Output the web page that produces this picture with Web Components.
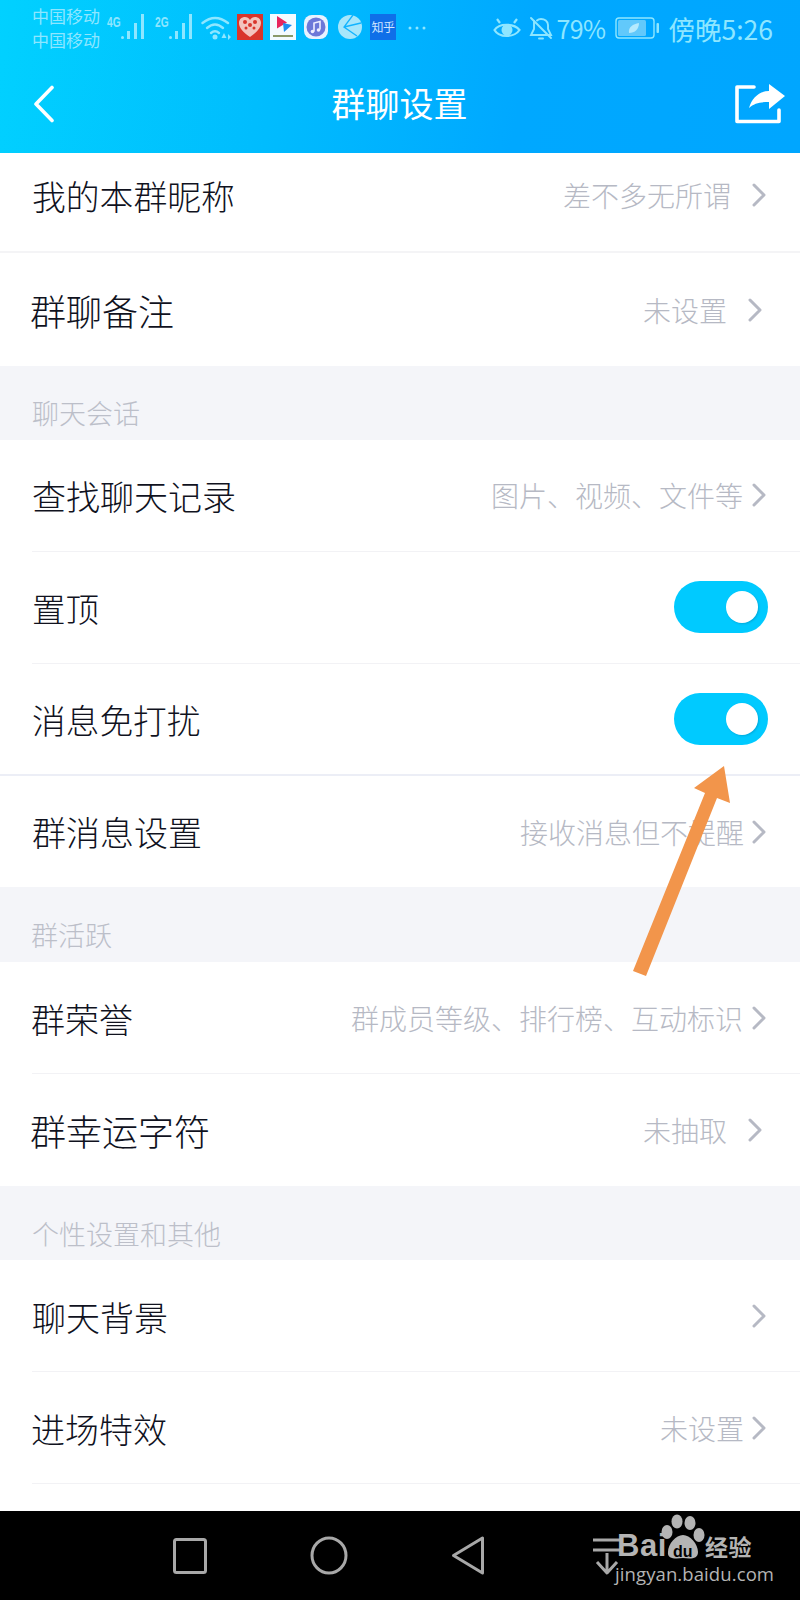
<!DOCTYPE html>
<html lang="zh-CN">
<head>
<meta charset="utf-8">
<title>群聊设置</title>
<style>
html, body { margin: 0; padding: 0; }
body {
	position: relative;
	width: 800px;
	height: 1600px;
	overflow: hidden;
	background: #fff;
	font-family: "Noto Sans CJK SC", "Noto Sans", sans-serif;
}
</style>
</head>
<body>
<qq-header title="群聊设置"></qq-header>
<set-row h="100" size="33.800" pad-bottom="16" line="full" value="差不多无所谓" gap="21" right="34">我的本群昵称</set-row>
<set-row h="113" size="36" left="30" value="未设置" gap="21" right="38" line="none">群聊备注</set-row>
<section-label h="74" pb="8">聊天会话</section-label>
<set-row h="112" size="34" pad-bottom="2" line="inset" value="图片、视频、文件等" gap="9" right="34">查找聊天记录</set-row>
<set-row h="112" size="33.500" pad-bottom="2" line="inset" toggle>置顶</set-row>
<set-row h="112" size="33.700" pad-bottom="2" line="strong" toggle>消息免打扰</set-row>
<set-row h="111" size="34" line="none" value="接收消息但不提醒" gap="8" right="34">群消息设置</set-row>
<section-label h="75" pb="8" left="31">群活跃</section-label>
<set-row h="112" size="34" left="31" line="inset" value="群成员等级、排行榜、互动标识" gap="9" right="34">群荣誉</set-row>
<set-row h="112" size="36" left="30" line="none" value="未抽取" gap="21" right="38">群幸运字符</set-row>
<section-label h="74" pb="7">个性设置和其他</section-label>
<set-row h="112" size="34" line="inset" chevron gap="0" right="34">聊天背景</set-row>
<set-row h="112" size="34" left="31" line="inset" value="未设置" gap="8" right="34">进场特效</set-row>
<set-row h="27" line="none"></set-row>
<android-nav></android-nav>
<baidu-mark></baidu-mark>
<pointer-arrow></pointer-arrow>
<script>
class StatusBar extends HTMLElement {
	constructor() {
		super();
		this.attachShadow({ mode: "open" });
		this.shadowRoot.innerHTML = `<style>
:host { display: flex; height: 58px; align-items: center; color: #8ee6ff; font-size: 17px; box-sizing: border-box; padding: 0 27px 2px 32px; }
.carrier { display: flex; flex-direction: column; line-height: 24px; width: 75px; }
.left { display: flex; align-items: flex-start; height: 28px; }
.right { display: flex; align-items: center; }
.left svg, .left .zhihu { flex: none; display: block; }
.right { margin-left: auto; font-size: 26px; }
.net { font: bold 15px/12px "Liberation Sans", sans-serif; width: 13px; margin-top: 2px; transform: scaleX(.68); transform-origin: left center; white-space: nowrap; }
.zhihu { width: 26px; height: 26px; background: #0f6fe8; color: #cfe6ff; font-size: 12px; line-height: 26px; text-align: center; margin-left: 8px; letter-spacing: -.5px; white-space: nowrap; overflow: hidden; }
.dots { margin: 11px 0 0 11px; }
.pct { margin: 0 9px 0 4px; letter-spacing: -.6px; font-size: 25px; }
.clock { margin-left: 10px; font-size: 26.500px; }
.bell { margin-left: 8px; }
</style>
<div class="carrier"><span>中国移动</span><span>中国移动</span></div>
<div class="left">
	<span class="net">4G</span>
	<svg width="26" height="28" viewBox="0 0 26 28"><g fill="#8ee6ff"><rect x="1" y="22" width="3" height="3" rx="1.5"/><rect x="7" y="17" width="3" height="8"/><rect x="14" y="9" width="3" height="16"/><rect x="21" y="0" width="3" height="25"/></g></svg>
	<span class="net" style="margin-left:9px">2G</span>
	<svg width="26" height="28" viewBox="0 0 26 28"><g fill="#8ee6ff"><rect x="1" y="22" width="3" height="3" rx="1.5"/><rect x="7" y="17" width="3" height="8"/><rect x="14" y="9" width="3" height="16"/><rect x="21" y="0" width="3" height="25"/></g></svg>
	<svg width="30" height="26" viewBox="0 0 30 26" style="margin:1px 0 0 7px"><g fill="none" stroke="#8ee6ff" stroke-width="2.400" stroke-linecap="round"><path d="M1.500 8 Q14 -2 27 8"/><path d="M6 13 Q14 6 22 13"/><path d="M10 18 Q14 14.500 18 18"/></g><circle cx="14" cy="22" r="2.500" fill="#8ee6ff"/><path d="M23 18l-2.500 5h5zM27 19l3 3-3 3z" fill="#8ee6ff"/></svg>
	<svg width="26" height="26" viewBox="0 0 26 26" style="margin-left:6px"><rect width="26" height="26" fill="#d9352b"/><path d="M13 23 C6 18 2 14 2 9 C2 5 5 3 8 3 C10 3 12 4 13 6 C14 4 16 3 18 3 C21 3 24 5 24 9 C24 14 20 18 13 23Z" fill="#f3c3bd"/><g fill="#d9352b"><circle cx="8" cy="8" r="2"/><circle cx="13" cy="11" r="2"/><circle cx="18" cy="8" r="2"/><circle cx="9" cy="14" r="1.500"/><circle cx="17" cy="14" r="1.500"/></g></svg>
	<svg width="26" height="26" viewBox="0 0 26 26" style="margin-left:7px"><rect width="26" height="26" fill="#f4fbff"/><path d="M7 2l10 6.500-10 6z" fill="#e8265e"/><path d="M13 9l9 2-8 7z" fill="#1e8df0"/><rect x="3" y="21" width="20" height="2" fill="#8b9a6a"/></svg>
	<svg width="24" height="26" viewBox="0 0 24 26" style="margin-left:8px"><rect y="1" width="24" height="24" rx="8" fill="#e8f2ff"/><circle cx="12" cy="13" r="9.500" fill="#6d78d8"/><path d="M10 17.500V9l6-1.500v8" fill="none" stroke="#eef" stroke-width="1.600"/><circle cx="8.500" cy="17.500" r="1.800" fill="#eef"/><circle cx="14.500" cy="16" r="1.800" fill="#eef"/></svg>
	<svg width="24" height="26" viewBox="0 0 24 26" style="margin-left:10px"><circle cx="12" cy="13" r="12" fill="#a6e6fb"/><path d="M15 1 L6 13 L19 22 M6 13 L23 9" fill="none" stroke="#12b4ff" stroke-width="1.300"/></svg>
	<span class="zhihu">知乎</span>
	<svg class="dots" width="20" height="6" viewBox="0 0 20 6"><g fill="#8ee6ff"><circle cx="3" cy="3" r="1.500"/><circle cx="10" cy="3" r="1.500"/><circle cx="17" cy="3" r="1.500"/></g></svg>
</div>
<div class="right">
	<svg width="28" height="24" viewBox="0 0 28 24"><g fill="none" stroke="#8ee6ff" stroke-width="2.200"><path d="M1.500 14 C6 7 21 7 26.500 14 C21 22 6 22 1.500 14Z"/><path d="M4 3l3 4M24 3l-3 4"/></g><circle cx="14" cy="14" r="5.500" fill="#8ee6ff"/></svg>
	<svg class="bell" width="24" height="24" viewBox="0 0 24 24"><g fill="none" stroke="#8ee6ff" stroke-width="1.900" stroke-linecap="round"><path d="M5 5 V13 L2 19 H22 L19 13 V9 C19 5 15.500 3 12 3 C10 3 9 3.500 8 4.500"/><path d="M2 2 L22 22"/><path d="M10 22.500h4"/></g></svg>
	<span class="pct">79%</span>
	<svg width="44" height="24" viewBox="0 0 44 24"><rect x="1" y="2" width="38" height="20" rx="3" fill="none" stroke="#8ee6ff" stroke-width="1.400"/><rect x="3" y="4" width="28" height="16" rx="1.500" fill="#62c9fb"/><path d="M14 17 C13 11 18 8 24 7 C24 13 20 17 14 17Z" fill="#b5eafd"/><rect x="41.500" y="7" width="2.500" height="10" rx="1" fill="#8ee6ff"/></svg>
	<span class="clock">傍晚5:26</span>
</div>`;
	}
}
customElements.define("status-bar", StatusBar);

class QqHeader extends HTMLElement {
	constructor() {
		super();
		this.attachShadow({ mode: "open" });
		this.shadowRoot.innerHTML = `<style>
:host { display: block; height: 153px; background: linear-gradient(100deg, #01d1ff 0%, #00bcfe 35%, #00a8ff 65%, #00a6ff 100%); }
nav { display: flex; align-items: center; justify-content: space-between; height: 95px; padding: 0 15px 0 33px; position: relative; color: #fff; }
h1 { position: absolute; left: 0; right: 0; margin: 0; text-align: center; font-size: 34px; font-weight: 400; line-height: 95px; top: -3px; padding-right: 1px; }
svg { display: block; position: relative; }
</style>
<status-bar></status-bar>
<nav>
	<svg width="22" height="38" viewBox="0 0 22 38" style="top:-2px"><path d="M19 2.500 L3 19 L19 35.500" fill="none" stroke="#fff" stroke-width="3.600" stroke-linecap="round" stroke-linejoin="round"/></svg>
	<h1></h1>
	<svg width="50" height="42" viewBox="0 0 50 42" style="top:-2px"><path d="M19 4 H2 V38.500 H44 V27" fill="none" stroke="#fff" stroke-width="3.600" stroke-linejoin="round" stroke-linecap="round"/><path d="M34 1 L50 13 L34 26 V19 C26 19 19 20 14 25 C17 14 25 8 34 8Z" fill="#fff"/></svg>
</nav>`;
		this.shadowRoot.querySelector("h1").textContent = this.getAttribute("title");
		this.removeAttribute("title");
	}
}
customElements.define("qq-header", QqHeader);

class ToggleSwitch extends HTMLElement {
	constructor() {
		super();
		this.attachShadow({ mode: "open" });
		this.shadowRoot.innerHTML = `<style>
:host { display: block; width: 94px; height: 52px; border-radius: 26px; background: #00caff; position: relative; }
i { position: absolute; left: 52px; top: 10px; width: 32px; height: 32px; border-radius: 50%; background: #fff; box-shadow: 1px 1px 2px rgba(0,80,120,.25); }
</style><i></i>`;
	}
}
customElements.define("toggle-switch", ToggleSwitch);

class SetRow extends HTMLElement {
	constructor() {
		super();
		this.attachShadow({ mode: "open" });
		let a = n => this.getAttribute(n);
		let line = a("line") || "none";
		let hasValue = this.hasAttribute("value");
		let arrow = hasValue || this.hasAttribute("chevron");
		this.shadowRoot.innerHTML = `<style>
:host { display: block; background: #fff; color: #10121e; }
.row { display: flex; align-items: center; box-sizing: border-box; height: var(--h); padding: var(--pt) var(--right) var(--pb) var(--left); position: relative; }
.label { flex: none; font-size: var(--size); font-weight: 300; white-space: nowrap; }
.value { margin-left: auto; font-size: 28px; font-weight: 300; color: #b6b9c4; white-space: nowrap; }
.end { margin-left: auto; display: flex; align-items: center; gap: var(--gap); }
.end .value { margin: 0; }
svg { display: block; flex: none; }
.line { position: absolute; bottom: 0; right: 0; height: 1px; background: #f2f2f5; left: 32px; }
.full { left: 0; height: 2px; background: #f4f4f6; }
.strong { left: 0; height: 2px; background: #eceef6; }
toggle-switch { margin-left: auto; }
</style>
<div class="row"><span class="label"><slot></slot></span>
${this.hasAttribute("toggle") ? "<toggle-switch></toggle-switch>" : ""}
${arrow ? `<div class="end">${hasValue ? '<span class="value"></span>' : ""}
<svg width="14" height="24" viewBox="0 0 14 24"><path d="M2 2 L12 12 L2 22" fill="none" stroke="#b6b9c4" stroke-width="3" stroke-linejoin="round" stroke-linecap="round"/></svg></div>` : ""}
${line !== "none" ? `<div class="line ${line}"></div>` : ""}
</div>`;
		let row = this.shadowRoot.querySelector(".row");
		row.style.setProperty("--h", a("h") + "px");
		row.style.setProperty("--size", (a("size") || 34) + "px");
		row.style.setProperty("--pt", (a("pad-top") || 0) + "px");
		row.style.setProperty("--pb", (a("pad-bottom") || 0) + "px");
		row.style.setProperty("--gap", (a("gap") || 0) + "px");
		row.style.setProperty("--right", (a("right") || 32) + "px");
		row.style.setProperty("--left", (a("left") || 32) + "px");
		if(hasValue) this.shadowRoot.querySelector(".value").textContent = a("value");
	}
}
customElements.define("set-row", SetRow);

class SectionLabel extends HTMLElement {
	constructor() {
		super();
		this.attachShadow({ mode: "open" });
		this.shadowRoot.innerHTML = `<style>
:host { display: flex; align-items: flex-end; box-sizing: border-box; background: #f4f5f9; color: #bcbfc9; font-size: 27px; font-weight: 300; }
</style><slot></slot>`;
		this.style.height = this.getAttribute("h") + "px";
		this.style.padding = `0 32px ${this.getAttribute("pb") || 5}px ${this.getAttribute("left") || 32}px`;
	}
}
customElements.define("section-label", SectionLabel);

class AndroidNav extends HTMLElement {
	constructor() {
		super();
		this.attachShadow({ mode: "open" });
		this.shadowRoot.innerHTML = `<style>
:host { display: block; height: 89px; background: #000; position: relative; }
svg { position: absolute; left: 0; top: 0; }
</style>
<svg width="800" height="89" viewBox="0 1511 800 89"><g fill="none" stroke="#a8a8a8" stroke-width="3" stroke-linejoin="round">
<rect x="174.500" y="1539.500" width="31" height="33" rx="2"/>
<ellipse cx="329" cy="1555.500" rx="17" ry="17.500"/>
<path d="M482.500 1538 V1573 L453.500 1555.500Z"/>
<path d="M593 1540 H620 M593 1550 H620 M607 1553 V1572 M597 1562 L607 1573 L617 1562"/>
</g></svg>`;
	}
}
customElements.define("android-nav", AndroidNav);

class BaiduMark extends HTMLElement {
	constructor() {
		super();
		this.attachShadow({ mode: "open" });
		this.shadowRoot.innerHTML = `<style>
:host { position: absolute; left: 600px; top: 1511px; width: 200px; height: 89px; color: #b4b4b4; }
span { position: absolute; white-space: nowrap; }
.bai { left: 17px; top: 17px; font: bold 31px/36px "Liberation Sans", sans-serif; letter-spacing: .5px; }
.cn { left: 105px; top: 21px; font-size: 23px; line-height: 28px; font-weight: 700; letter-spacing: .5px; }
.url { left: 15px; top: 52px; font: 400 18.500px/22px "Open Sans", sans-serif; letter-spacing: .1px; }
svg { position: absolute; left: 61px; top: 3px; }
.du { left: 73px; top: 32px; font: bold 16px/18px "Liberation Sans", sans-serif; color: #000; }
</style>
<span class="bai">Bai</span>
<svg width="44" height="46" viewBox="0 0 44 46"><g fill="#b4b4b4"><ellipse cx="16" cy="7.500" rx="5.500" ry="7"/><ellipse cx="29" cy="9" rx="5.500" ry="7"/><ellipse cx="6" cy="18" rx="5.500" ry="7"/><ellipse cx="38" cy="21" rx="5.500" ry="7"/><path d="M22 21 C29 21 37 30 37 38 C37 45 30 45 22 44 C14 45 6 45 7 38 C7 30 15 21 22 21Z"/></g></svg>
<span class="du">du</span>
<span class="cn">经验</span>
<span class="url">jingyan.baidu.com</span>`;
	}
}
customElements.define("baidu-mark", BaiduMark);

class PointerArrow extends HTMLElement {
	constructor() {
		super();
		this.attachShadow({ mode: "open" });
		this.shadowRoot.innerHTML = `<style>
:host { position: absolute; left: 0; top: 0; pointer-events: none; }
svg { display: block; }
</style>
<svg width="800" height="1600" viewBox="0 0 800 1600"><path d="M724 766 L730 803 L717 798 L646 976 L633 971 L705 793 L694 788Z" fill="#f2954b"/></svg>`;
	}
}
customElements.define("pointer-arrow", PointerArrow);
</script>
</body>
</html>
